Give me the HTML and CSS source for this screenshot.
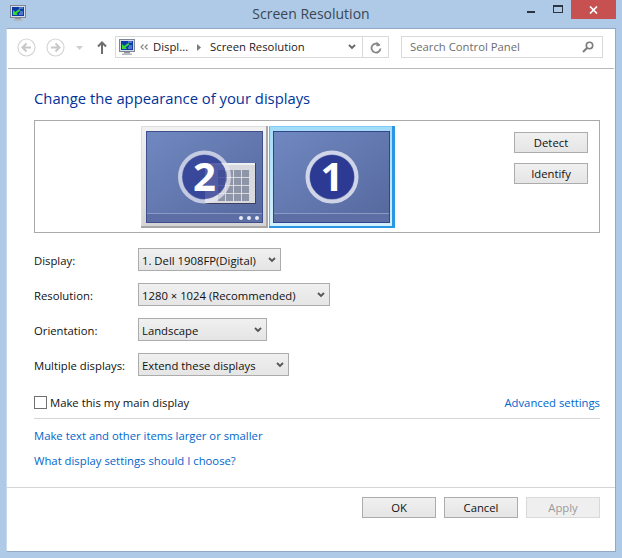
FILE: index.html
```html
<!DOCTYPE html>
<html lang="en">
<head>
<meta charset="utf-8">
<title>Screen Resolution</title>
<link rel="stylesheet" href="styles.css">
</head>
<body>
<div class="window">
  <header class="titlebar">
    <svg class="app-icon" width="16" height="16" viewBox="0 0 16 16"><rect x="0.5" y="0.5" width="15" height="12" fill="#d8dce4" stroke="#7d8794"/><rect x="2" y="2" width="12" height="9" fill="#0c3aa8"/><path d="M3 5l0 5 5 0-1.6-1.6 4-3-1.2-1.4-4 3z" fill="#33dd33"/><path d="M9 3h4M10 7h3M9 9h4" stroke="#8fb4f0"/><rect x="5" y="13" width="6" height="1.5" fill="#8b939c"/><rect x="3" y="14.5" width="10" height="1.5" fill="#b4b9c0"/></svg>
    <h1 class="wintitle">Screen Resolution</h1>
    <div class="winctl">
      <svg width="8" height="2" class="min" viewBox="0 0 8 2"><rect width="8" height="2" fill="#2b3440"/></svg>
      <svg width="10" height="8" class="max" viewBox="0 0 10 8"><rect x=".5" y="1" width="9" height="6.5" fill="none" stroke="#2b3440"/><rect width="10" height="2" fill="#2b3440"/></svg>
      <div class="close"><svg width="9" height="8" viewBox="0 0 9 8"><path d="M1 .5l7 7M8 .5l-7 7" stroke="#fff" stroke-width="1.7"/></svg></div>
    </div>
  </header>
  <div class="client">
    <nav class="toolbar">
      <svg class="nav-btn" width="19" height="19" viewBox="0 0 19 19"><circle cx="9.5" cy="9.5" r="8.5" fill="none" stroke="#d6d6d6" stroke-width="1.2"/><path d="M14 9.5H6M9.5 5.5l-4 4 4 4" fill="none" stroke="#c8c8c8" stroke-width="2"/></svg>
      <svg class="nav-btn fwd" width="19" height="19" viewBox="0 0 19 19"><circle cx="9.5" cy="9.5" r="8.5" fill="none" stroke="#d6d6d6" stroke-width="1.2"/><path d="M5 9.5h8M9.5 5.5l4 4-4 4" fill="none" stroke="#c8c8c8" stroke-width="2"/></svg>
      <svg class="recent" width="7" height="4" viewBox="0 0 7 4"><path d="M0 0h7L3.5 4z" fill="#cfcfcf"/></svg>
      <svg class="up" width="10" height="13" viewBox="0 0 10 13"><path d="M5 13V2M1 5.500l4-4 4 4" fill="none" stroke="#6e6e6e" stroke-width="2"/></svg>
      <div class="address">
        <svg class="addr-icon" width="16" height="16" viewBox="0 0 16 16"><rect x="0.500" y="0.500" width="15" height="12" fill="#d8dce4" stroke="#7d8794"/><rect x="2" y="2" width="12" height="9" fill="#0c3aa8"/><path d="M3 5l0 5 5 0-1.600-1.600 4-3-1.200-1.400-4 3z" fill="#33dd33"/><path d="M9 3h4M10 7h3M9 9h4" stroke="#8fb4f0"/><rect x="5" y="13" width="6" height="1.500" fill="#8b939c"/><rect x="3" y="14.500" width="10" height="1.500" fill="#b4b9c0"/></svg>
        <svg class="chev-double" width="8" height="6" viewBox="0 0 8 6"><path d="M3.500.5L1 3l2.500 2.500M7.500.5L5 3l2.500 2.500" fill="none" stroke="#808080" stroke-width="1.100"/></svg>
        <span class="crumb">Displ...</span>
        <svg class="crumb-sep" width="4" height="7" viewBox="0 0 4 7"><path d="M0 0l4 3.500L0 7z" fill="#7a7a7a"/></svg>
        <span class="crumb">Screen Resolution</span>
        <svg class="addr-down" width="8" height="6" viewBox="0 0 8 6"><path d="M1 1l3 3 3-3" fill="none" stroke="#666" stroke-width="1.800"/></svg>
        <div class="refresh"><svg width="12" height="13" viewBox="0 0 12 13"><path d="M9.500 4.200A4.500 4.500 0 1 0 10.500 7.500" fill="none" stroke="#868686" stroke-width="1.800"/><path d="M6.500 0.500v5l4-1z" fill="#868686"/></svg></div>
      </div>
      <div class="search">
        <span class="search-text">Search Control Panel</span>
        <svg width="12" height="12" viewBox="0 0 12 12"><circle cx="7.500" cy="4.500" r="3.200" fill="none" stroke="#7c7c7c" stroke-width="1.600"/><path d="M5 7l-4 4" stroke="#7c7c7c" stroke-width="2"/></svg>
      </div>
    </nav>
    <main class="content">
      <h2 class="heading">Change the appearance of your displays</h2>
      <section class="preview">
        <div class="monitors">
          <svg width="127" height="102" viewBox="0 0 127 102">
            <defs>
              <linearGradient id="scr" x1="0" y1="0" x2="1" y2="1"><stop offset="0" stop-color="#7088c0"/><stop offset="1" stop-color="#55689e"/></linearGradient>
              <linearGradient id="gray" x1="0" y1="0" x2="0" y2="1"><stop offset="0" stop-color="#f2f2f2"/><stop offset="1" stop-color="#d4d4d4"/></linearGradient>
            </defs>
            <rect width="127" height="102" fill="url(#gray)"/>
            <rect x="0" y="0" width="1" height="102" fill="#dcdcdc"/>
            <rect x="0" y="0" width="127" height="1" fill="#dedede"/>
            <rect x="125" y="0" width="2" height="102" fill="#a8a8a8"/>
            <rect x="0" y="100" width="127" height="2" fill="#a6a6a6"/>
            <rect x="5" y="5" width="117" height="92" fill="#3f4f8e"/>
            <rect x="6" y="6" width="115" height="90" fill="url(#scr)"/>
            <rect x="6" y="87" width="115" height="9" fill="#5c6ea4"/>
            <rect x="6" y="87" width="115" height="1" fill="#8b9ac4"/>
            <rect x="64" y="37" width="50" height="41" fill="#d9dade"/>
            <rect x="64" y="37" width="50" height="2" fill="#eef0f3"/>
            <rect x="64" y="77" width="50" height="1" fill="#3d4160"/>
            <rect x="114" y="37" width="1" height="41" fill="#3d4160"/>
            <g fill="#8f95a8"><rect x="77" y="44" width="7" height="7"/><rect x="85" y="44" width="7" height="7"/><rect x="93" y="44" width="7" height="7"/><rect x="101" y="44" width="7" height="7"/><rect x="77" y="52" width="7" height="7"/><rect x="85" y="52" width="7" height="7"/><rect x="93" y="52" width="7" height="7"/><rect x="101" y="52" width="7" height="7"/><rect x="77" y="60" width="7" height="7"/><rect x="85" y="60" width="7" height="7"/><rect x="93" y="60" width="7" height="7"/><rect x="101" y="60" width="7" height="7"/><rect x="77" y="68" width="7" height="7"/><rect x="85" y="68" width="7" height="7"/><rect x="93" y="68" width="7" height="7"/><rect x="101" y="68" width="7" height="7"/></g>
            <circle cx="63.500" cy="51" r="22" fill="#2d3a93" fill-opacity=".78"/>
            <circle cx="63.500" cy="51" r="24.500" fill="none" stroke="#e4e5f2" stroke-opacity=".75" stroke-width="4"/>
            <text x="63.500" y="65" class="mon-num" text-anchor="middle">2</text>
            <g fill="#e8eaf4"><circle cx="100" cy="92" r="2"/><circle cx="108" cy="92" r="2"/><circle cx="116" cy="92" r="2"/></g>
          </svg>
          <svg width="126" height="102" viewBox="0 0 126 102">
            <defs>
              <linearGradient id="scr1" x1="0" y1="0" x2="1" y2="1"><stop offset="0" stop-color="#7088c0"/><stop offset="1" stop-color="#55689e"/></linearGradient>
              <linearGradient id="blue" x1="0" y1="0" x2="0" y2="1"><stop offset="0" stop-color="#a2dcf9"/><stop offset="1" stop-color="#d2f1fd"/></linearGradient>
            </defs>
            <rect width="126" height="102" fill="url(#blue)"/>
            <rect x="0" y="0" width="1" height="102" fill="#55b8f0"/>
            <rect x="0" y="0" width="126" height="1" fill="#7fcdf6"/>
            <rect x="123" y="0" width="3" height="102" fill="#2a96e4"/>
            <rect x="0" y="100" width="126" height="2" fill="#2a96e4"/>
            <rect x="4" y="5" width="117" height="92" fill="#34448c"/>
            <rect x="5" y="6" width="115" height="90" fill="url(#scr1)"/>
            <rect x="5" y="87" width="115" height="9" fill="#5c6ea4"/>
            <rect x="5" y="87" width="115" height="1" fill="#8b9ac4"/>
            <circle cx="63" cy="51" r="22" fill="#2d3a93"/>
            <circle cx="63" cy="51" r="24.500" fill="none" stroke="#e4e5f2" stroke-opacity=".85" stroke-width="4"/>
            <text x="63" y="65" class="mon-num" text-anchor="middle">1</text>
          </svg>
        </div>
        <div class="preview-actions">
          <button class="btn" type="button">Detect</button>
          <button class="btn" type="button">Identify</button>
        </div>
      </section>
      <div class="form">
        <div class="row"><label class="lbl">Display:</label><div class="combo w-display"><span>1. Dell 1908FP(Digital)</span><svg width="8" height="6" viewBox="0 0 8 6"><path d="M1 1l3 3 3-3" fill="none" stroke="#555" stroke-width="1.800"/></svg></div></div>
        <div class="row"><label class="lbl">Resolution:</label><div class="combo w-res"><span>1280 × 1024 (Recommended)</span><svg width="8" height="6" viewBox="0 0 8 6"><path d="M1 1l3 3 3-3" fill="none" stroke="#555" stroke-width="1.800"/></svg></div></div>
        <div class="row"><label class="lbl">Orientation:</label><div class="combo w-ori"><span>Landscape</span><svg width="8" height="6" viewBox="0 0 8 6"><path d="M1 1l3 3 3-3" fill="none" stroke="#555" stroke-width="1.800"/></svg></div></div>
        <div class="row"><label class="lbl">Multiple displays:</label><div class="combo w-multi"><span>Extend these displays</span><svg width="8" height="6" viewBox="0 0 8 6"><path d="M1 1l3 3 3-3" fill="none" stroke="#555" stroke-width="1.800"/></svg></div></div>
      </div>
      <div class="main-row">
        <label class="check"><input type="checkbox" class="box"><span>Make this my main display</span></label>
        <a class="link" href="#">Advanced settings</a>
      </div>
      <hr class="rule">
      <a class="link block first" href="#">Make text and other items larger or smaller</a>
      <a class="link block" href="#">What display settings should I choose?</a>
    </main>
    <footer class="footer">
      <button class="btn" type="button">OK</button>
      <button class="btn" type="button">Cancel</button>
      <button class="btn disabled" type="button">Apply</button>
    </footer>
  </div>
</div>
</body>
</html>
```

FILE: styles.css
```css
* { box-sizing: border-box; }
html, body { margin: 0; padding: 0; }
body {
  width: 622px;
  height: 558px;
  overflow: hidden;
  background: #aecae6;
  font-family: "Open Sans", "Noto Sans", sans-serif;
  font-size: 11.3px;
  color: #111;
}
.window { height: 558px; display: flex; flex-direction: column; }
.titlebar { height: 28px; display: flex; align-items: flex-start; padding-left: 10px; position: relative; }
.app-icon { margin-top: 5px; }
.wintitle {
  position: absolute; left: 0; right: 0; top: 4px; margin: 0;
  text-align: center; font-size: 14px; font-weight: 400; line-height: 20px; color: #3a4654;
}
.winctl { margin-left: auto; margin-right: 6px; display: flex; align-items: flex-start; position: relative; }
.min { margin-top: 11px; }
.max { margin: 5px 8px 0 18px; }
.close {
  width: 45px; height: 19px; background: #c75050;
  display: flex; align-items: center; justify-content: center;
}
.client {
  width: 610px; height: 524px; margin-left: 6px;
  background: #fff; border: 1px solid #8fa9c6; border-left-color: #c9d8ea; display: flex; flex-direction: column;
}
.toolbar {
  height: 40px; margin: 0 1px; border-bottom: 1px solid #b9b9b9;
  display: flex; align-items: flex-start; padding-left: 9px;
}
.nav-btn { margin-top: 9px; }
.fwd { margin-left: 10px; }
.recent { margin: 17px 0 0 11px; }
.up { margin: 12px 0 0 14px; }
.address {
  width: 274px; height: 22px; margin: 7px 0 0 8px; border: 1px solid #d9d9d9;
  display: flex; align-items: center; padding-left: 3px; color: #222;
}
.addr-icon { flex: none; }
.chev-double { margin-left: 5px; flex: none; }
.crumb { margin-left: 5px; line-height: 20px; white-space: nowrap; }
.crumb-sep { margin-left: 9px; margin-right: 4px; }
.addr-down { margin-left: auto; margin-right: 6px; }
.refresh {
  width: 26px; height: 20px; border-left: 1px solid #d9d9d9;
  display: flex; align-items: center; justify-content: center;
}
.search {
  width: 202px; height: 22px; margin: 7px 0 0 12px; border: 1px solid #d9d9d9;
  display: flex; align-items: center; justify-content: space-between; padding: 0 8px;
  color: #6d6d6d;
}
.search-text { line-height: 18px; margin-bottom: 1px; }
.content { flex: 1; padding: 0 15px 0 27px; display: flex; flex-direction: column; }
.heading { margin: 19px 0 0; font-size: 14.8px; font-weight: 400; line-height: 20px; color: #003399; }
.preview {
  height: 113px; margin-top: 12px; border: 1px solid #a9a9a9;
  display: flex; position: relative;
}
.monitors { display: flex; gap: 1px; margin: 5px 0 0 106px; height: 102px; }
.mon-num { font-family: "Open Sans", sans-serif; font-weight: 700; font-size: 40px; fill: #fff; }
.preview-actions { margin: 11px 0 0 119px; display: flex; flex-direction: column; gap: 10px; }
.btn {
  width: 74px; height: 21px; padding: 0; border: 1px solid #acacac;
  background: linear-gradient(#f0f0f0, #e5e5e5);
  font: inherit; color: #111; display: block;
}
.btn.disabled { background: #efefef; border-color: #d9d9d9; color: #9a9a9a; }
.form { margin-top: 15px; display: flex; flex-direction: column; gap: 12px; }
.row { display: flex; align-items: center; height: 23px; }
.lbl { width: 104px; flex: none; padding-top: 1px; }
.combo {
  height: 23px; border: 1px solid #acacac; background: linear-gradient(#f0f0f0, #e5e5e5);
  display: flex; align-items: center; justify-content: space-between; padding: 0 4px 0 3px; white-space: nowrap;
}
.combo span { padding-top: 1px; }
.w-display { width: 143px; }
.w-res { width: 192px; }
.w-ori { width: 129px; }
.w-multi { width: 151px; }
.main-row { margin-top: 17px; height: 18px; display: flex; align-items: center; justify-content: space-between; }
.check { display: flex; align-items: center; }
.box {
  appearance: none; width: 13px; height: 13px; margin: 0 3px 0 0; background: #fff; border: 1px solid #707070;
}
.link { color: #0066cc; text-decoration: none; }
.rule { width: 100%; margin: 7px 0 0; border: 0; border-top: 1px solid #d5d5d5; }
.block { display: block; line-height: 16px; }
.first { margin-top: 9px; }
.block + .block { margin-top: 9px; }
.footer {
  height: 64px; border-top: 1px solid #d5d5d5; display: flex; justify-content: flex-end; gap: 8px; padding: 9px 15px 0 0;
}
```
